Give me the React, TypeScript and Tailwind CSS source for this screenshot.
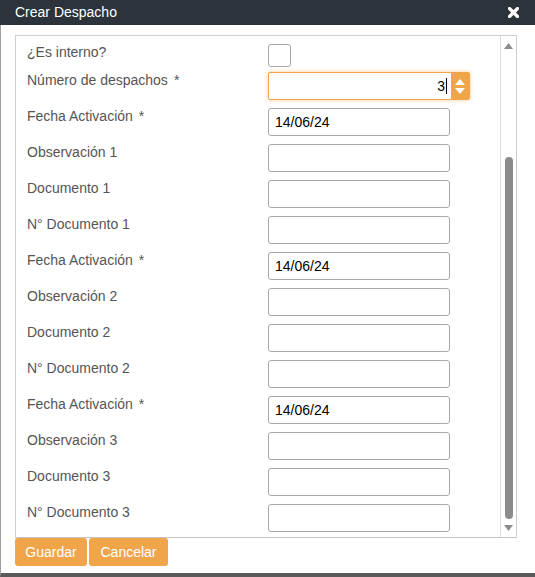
const font = { fontFamily: '"Liberation Sans", Arial, sans-serif' };

type Row = { label: string; required?: boolean; kind: "check" | "number" | "text"; value?: string };

const rows: Row[] = [
  { label: "¿Es interno?", kind: "check" },
  { label: "Número de despachos", required: true, kind: "number", value: "3" },
  ...[1, 2, 3].flatMap((n) => [
    { label: "Fecha Activación", required: true, kind: "text" as const, value: "14/06/24" },
    { label: `Observación ${n}`, kind: "text" as const },
    { label: `Documento ${n}`, kind: "text" as const },
    { label: `N° Documento ${n}`, kind: "text" as const },
  ]),
];

function Field({ row }: { row: Row }) {
  if (row.kind === "check") {
    return <div className="mt-[2px] w-[23px] h-[23px] border border-[#a9a9a9] rounded-[3px] bg-white" />;
  }
  if (row.kind === "number") {
    return (
      <div className="mt-[2px] flex w-[202px] h-[28px] border border-[#f0a54b] rounded-[2px] shadow-[0_0_4px_rgba(240,165,75,0.55)] bg-white">
        <div className="flex-1 flex items-center justify-end pr-[4px] text-[14px] text-black">
          {row.value}
          <span className="ml-[1px] w-px h-[16px] bg-black" />
        </div>
        <div className="w-[18px] bg-[#f0a54b] flex flex-col items-center justify-center gap-[3px]">
          <svg width="10" height="6" viewBox="0 0 10 6"><path d="M5 0 L10 6 L0 6 Z" fill="#fff" /></svg>
          <svg width="10" height="6" viewBox="0 0 10 6"><path d="M0 0 L10 0 L5 6 Z" fill="#fff" /></svg>
        </div>
      </div>
    );
  }
  return (
    <div className="mt-[2px] w-[182px] h-[28px] border border-[#a9a9a9] rounded-[3px] bg-white flex items-center px-[6px] text-[14px] text-black">
      {row.value}
    </div>
  );
}

export default function App() {
  return (
    <div className="w-[535px] h-[577px] overflow-hidden bg-white" style={font}>
      <div className="h-[25px] bg-[#2c333a] flex items-center justify-between pl-[15px] pr-[16px]">
        <span className="text-white text-[14px]">Crear Despacho</span>
        <svg width="11" height="11" viewBox="0 0 11 11">
          <path d="M1.5 1.5 L9.5 9.5 M9.5 1.5 L1.5 9.5" stroke="#fff" strokeWidth="3.2" strokeLinecap="round" />
        </svg>
      </div>
      <div className="h-[552px] border-l border-[#a0a0a0] border-b-[4px] border-b-[#5a5a5a] pl-[14px] pt-[10px]">
        <div className="w-[502px] h-[503px] border border-[#cfcfcf] border-b-[#c4c4c4] flex overflow-hidden">
          <div className="flex-1 pl-[11px] pt-[6px] flex flex-col gap-[6px]">
            {rows.map((row, i) => (
              <div key={i} className={`flex items-start ${i === 0 ? "-mb-[3px]" : ""}`}>
                <div className="w-[241px] leading-[20px] text-[14px] text-[#555]">
                  {row.label}
                  {row.required && <span className="ml-[6px]">*</span>}
                </div>
                <Field row={row} />
              </div>
            ))}
          </div>
          <div className="w-[16px] border-l border-[#dcdcdc] flex flex-col items-center">
            <svg className="mt-[7px]" width="9" height="6" viewBox="0 0 9 6"><path d="M4.5 0 L9 6 L0 6 Z" fill="#8c8c8c" /></svg>
            <div className="mt-[108px] w-[8px] h-[362px] rounded-full bg-[#8c8c8c]" />
            <svg className="mt-[6px]" width="9" height="6" viewBox="0 0 9 6"><path d="M0 0 L9 0 L4.5 6 Z" fill="#8c8c8c" /></svg>
          </div>
        </div>
        <div className="flex gap-[2px]">
          <button className="w-[72px] h-[28px] rounded-[3px] bg-[#f0a54b] text-white text-[14px]">Guardar</button>
          <button className="w-[79px] h-[28px] rounded-[3px] bg-[#f0a54b] text-white text-[14px]">Cancelar</button>
        </div>
      </div>
    </div>
  );
}
